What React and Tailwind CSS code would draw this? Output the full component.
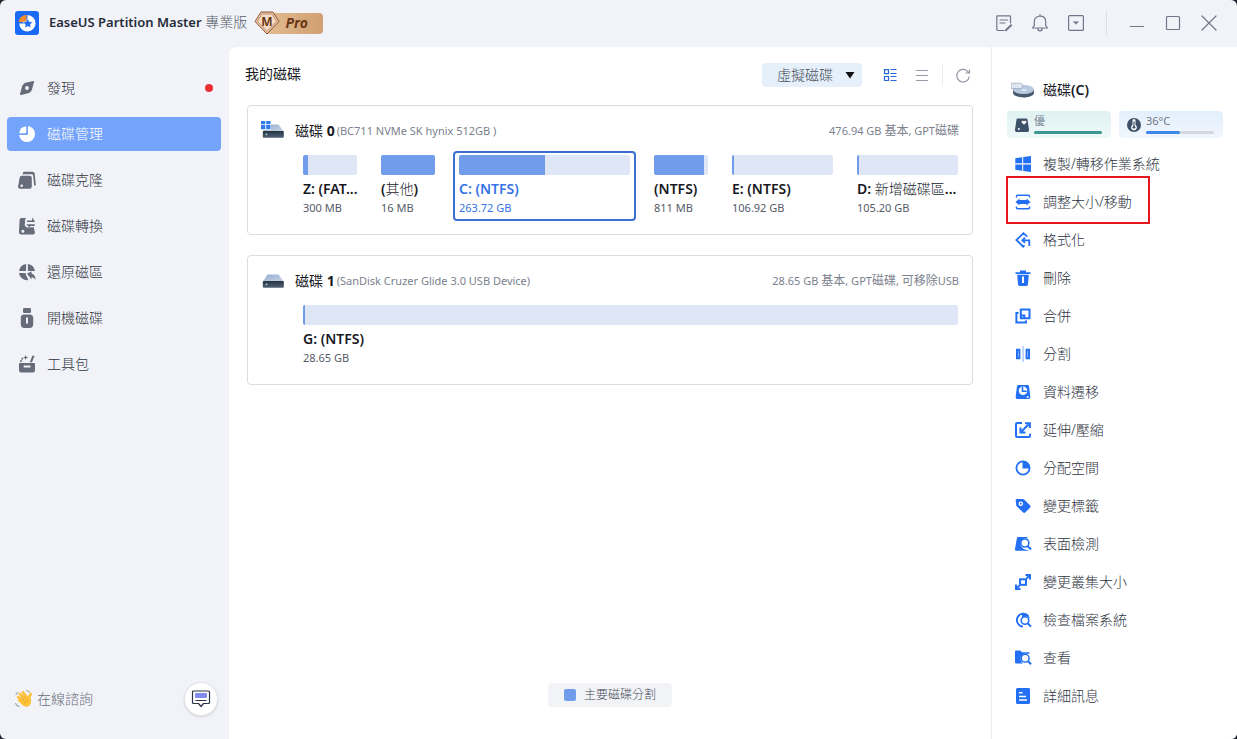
import React from "react";
import clsx from "clsx";

// ---------------- SIDEBAR ICONS (18x18) ----------------
const NAV_ICONS = {
  discover: (
    <>
      <path
        d="M7 4.900 15.300 2.800 12.900 11.200 10.900 13.300 2.800 15.300 5 7z"
        stroke="currentColor"
        strokeWidth="1.600"
        strokeLinejoin="round"
      />
      <circle cx="9" cy="9" r="1.900" fill="#f2f3f8" />
    </>
  ),
  manage: (
    <>
      <path d="M10 1.100A8 8 0 1 1 1.100 10H9a1 1 0 0 0 1-1z" />
      <path d="M8.200 1.200V7.200a1 1 0 0 1-1 1H1.200a8 8 0 0 1 7-7z" />
    </>
  ),
  clone: (
    <>
      <path
        fillRule="evenodd"
        d="M3.800 4.800H11.700c1.200 0 2 .8 2.100 2V15.500a2.200 2.200 0 0 1-2.200 2.200H2.200A2.200 2.200 0 0 1 .1 15.200L1.700 6.600C1.900 5.500 2.700 4.800 3.800 4.800zM3.700 13.500a1.300 1.300 0 1 0 0 2.600 1.300 1.300 0 0 0 0-2.600z"
      />
      <path
        d="M5.500.8H14.500a2.200 2.200 0 0 1 2.200 2L17.800 13.500c.1.600-.3 1.100-.9 1.100l-.8-.1L15.200 4.800c-.1-.9-.7-1.500-1.600-1.500H4.300z"
      />
    </>
  ),
  convert: (
    <>
      <path
        fillRule="evenodd"
        d="M3.500 1H8.200C7 2.300 6.600 3.900 7.200 5.600 5.900 7.500 6.800 9.600 9 10.400l6.700-.1 1.200 4.800A2.200 2.200 0 0 1 14.700 17.500H3.100A2.200 2.200 0 0 1 1 15.200L1.600 2.800A1.900 1.900 0 0 1 3.500 1zM4.900 12.800a1.500 1.500 0 1 0 0 3 1.500 1.500 0 0 0 0-3z"
      />
      <path d="M9 3.400h5V.4l3.200 4.500H9zM16.700 8.900h-4.600v2.200L8.200 7.300h8.500z" />
    </>
  ),
  restore: (
    <>
      <path d="M8.100 1v6.200a.9.900 0 0 1-.9.900H1A7.900 7.900 0 0 1 8.100 1zM9.900 1A7.900 7.900 0 0 1 17 8.100h-6.200a.9.900 0 0 1-.9-.9zM1 9.900h6.300L10.300 17A8 8 0 0 1 1 9.900z" />
      <path d="M8.900 10.400 13.500 8.500v2.100c2.500.6 4 2.700 4 6.400-1.100-2-2.200-2.700-4-2.800v2.300z" />
    </>
  ),
  boot: (
    <>
      <rect x="5" y="-1" width="8" height="5" rx="1.300" />
      <path
        fillRule="evenodd"
        d="M6 5.500h6c2 0 3.200 1.300 3.200 3.200v6.500c0 2.200-1.300 3.800-3.500 3.800H6.300c-2.200 0-3.500-1.600-3.500-3.800V8.700C2.800 6.800 4 5.500 6 5.500zM8 8.500v6h2v-6z"
      />
    </>
  ),
  toolkit: (
    <>
      <path
        fillRule="evenodd"
        d="M2 8H16c.7 0 1 .4 1 1v6.300A2.200 2.200 0 0 1 14.800 17.500H3.200A2.200 2.200 0 0 1 1 15.300V9c0-.6.3-1 1-1zM5.700 10.600v1.800h6.700v-1.800z"
      />
      <path d="M14.300.8h2.300L14 7.300h-2.200zM7.600 0l.7 1.800 1.900.7-1.900.7-.7 1.900-.7-1.900L5 2.500l1.900-.7z" />
      <circle cx="4.200" cy="3.800" r="1" />
      <path d="M2 5.200h2v1.500H2z" />
    </>
  ),
};

// ---------------- ACTION ICONS (18x18) ----------------
const ACTION_ICONS = {
  windows: (
    <path d="M1.300 3.200 8.200 2.200V8.300H1.300zM9.200 2 17 1V8.300H9.200zM1.300 9.500H8.200V15.800L1.300 14.800zM9.200 9.500H17V17L9.200 15.900z" />
  ),
  resize: (
    <>
      <path
        d="M2.500 4.500V3.200a1 1 0 0 1 1-1H14.500a1 1 0 0 1 1 1V4.500M2.500 13.500v1.300a1 1 0 0 0 1 1H14.500a1 1 0 0 0 1-1V13.500"
        fill="none"
        stroke="currentColor"
        strokeWidth="1.500"
      />
      <path d="M1.500 9 5.500 5.500V7H12.500V5.500L16.500 9l-4 3.500V11H5.500V12.500z" />
    </>
  ),
  format: (
    <path
      d="M13.200 5.700 9.400 2.200 2.400 9l6.700 6.700L10.500 14.400M7.500 9.300H15.300V15M11 6.700 8.400 9.300 11 12"
      fill="none"
      stroke="currentColor"
      strokeWidth="1.800"
    />
  ),
  remove: (
    <>
      <path d="M1.500 3.200H6V1.600h6v1.600h4.500V5h-15z" />
      <path fillRule="evenodd" d="M3.200 5.800H14.800L14 15.600a1.500 1.500 0 0 1-1.500 1.300h-7A1.500 1.500 0 0 1 4 15.600zM8 7.500V14h2V7.500z" />
    </>
  ),
  merge: (
    <>
      <path
        fillRule="evenodd"
        d="M6.800 1.500h8.700c.6 0 1 .4 1 1v8.700c0 .6-.4 1-1 1H6.800c-.6 0-1-.4-1-1V2.500c0-.6.4-1 1-1zM7.800 3.500v6.700h6.700V3.500z"
      />
      <path d="M4.500 6H2.400v9.400H12V13.500M7 8.500h3.300V11" fill="none" stroke="currentColor" strokeWidth="2" />
    </>
  ),
  split: (
    <>
      <path d="M3 4.800H5.400V13.200H3zM12.600 4.800H15V13.200H12.600z" fill="none" stroke="currentColor" strokeWidth="2" />
      <path d="M8.500 1h1.200V17H8.500z" opacity=".45" />
    </>
  ),
  migrate: (
    <>
      <path d="M4.500 2h9c.8 0 1.300.4 1.500 1.100L16.300 13.500c.2 1.500-.6 2.500-1.800 2.500H3.500C2.300 16 1.500 15 1.700 13.500L3 3.100C3.200 2.400 3.700 2 4.500 2z" />
      <circle cx="9" cy="7.800" r="4.300" fill="#fff" />
      <path d="M8.500 3.800V8.200H12.800" fill="none" stroke="currentColor" strokeWidth="1.600" />
      <circle cx="13.700" cy="14" r="1" fill="#fff" />
    </>
  ),
  extend: (
    <path
      d="M8 2H3a1 1 0 0 0-1 1V15a1 1 0 0 0 1 1H15a1 1 0 0 0 1-1V12.800M6.500 6.500V11.500H11.500M7 11 14.500 3.500M11 2.200h4.900V7"
      fill="none"
      stroke="currentColor"
      strokeWidth="2"
    />
  ),
  allocate: (
    <>
      <circle cx="9" cy="9" r="6.600" fill="none" stroke="currentColor" strokeWidth="1.800" />
      <path d="M8.500 2.500A6.500 6.500 0 0 1 15.500 9.500H8.500z" />
    </>
  ),
  label: (
    <path
      fillRule="evenodd"
      d="M2.800 2 8.800 1.900c.5 0 .9.200 1.300.5l6.100 6.200c.6.600.6 1.400 0 2l-5 5c-.6.6-1.400.6-2 0L2.700 9.300C2.400 9 2.200 8.600 2.200 8.100L1.700 3.200C1.600 2.500 2 2 2.800 2zM6.800 4.500a2.200 2.200 0 1 0 0 4.400 2.200 2.200 0 0 0 0-4.400zm0 1.300a.9.900 0 1 1 0 1.800.9.900 0 0 1 0-1.800z"
    />
  ),
  surface: (
    <>
      <path d="M4.700 2H13l1 1.200H10L6.300 7l.5 4.200 2.800 2.800L15.500 15.800H2.600C1.300 15.800.8 15 1 14L2.900 3.300C3.100 2.500 3.700 2 4.700 2z" />
      <circle cx="10.800" cy="8" r="4" fill="none" stroke="currentColor" strokeWidth="1.600" />
      <path d="M13.600 11 17 14.500" stroke="currentColor" strokeWidth="2" />
    </>
  ),
  cluster: (
    <>
      <rect x="6" y="6.300" width="6" height="5.500" fill="none" stroke="currentColor" strokeWidth="2" />
      <path d="M11.500 2H16V6.500M16 2 12.500 5.500M2 11.500V16H6.500M2 16 5.500 12.500" fill="none" stroke="currentColor" strokeWidth="2" />
    </>
  ),
  check: (
    <>
      <path d="M14.300 4.800A6.500 6.500 0 1 0 9 15.600" fill="none" stroke="currentColor" strokeWidth="1.900" />
      <path d="M8 2A7 7 0 0 1 16 7.500L12.500 5 8 6z" />
      <circle cx="11" cy="9.500" r="3.800" fill="none" stroke="currentColor" strokeWidth="1.600" />
      <path d="M13.700 12.200 17 15.600" stroke="currentColor" strokeWidth="2" />
    </>
  ),
  view: (
    <>
      <path d="M2.200 1.500H6.300L8 3.200h7.500V4.700H10L6.600 7.800l.3 4 2 2.700H2.200C1.500 14.500 1 14 1 13.300V2.700C1 2 1.500 1.500 2.200 1.500z" />
      <circle cx="11.200" cy="9.200" r="3.900" fill="none" stroke="currentColor" strokeWidth="1.500" />
      <path d="M13.900 12 17 15.300" stroke="currentColor" strokeWidth="2" />
    </>
  ),
  details: (
    <path
      fillRule="evenodd"
      d="M3.500 1h11C15.300 1 16 1.700 16 2.500v13c0 .8-.7 1.500-1.500 1.500h-11C2.700 17 2 16.300 2 15.500v-13C2 1.700 2.700 1 3.500 1zM5 5v1.500h3.500V5zM5 8.700v1.500h7V8.700zM5 12.200v1.500h8v-1.500z"
    />
  ),
};

// ---------------- DATA ----------------
const NAV_ITEMS = [
  { icon: "discover", name: "發現", dot: true },
  { icon: "manage", name: "磁碟管理", active: true },
  { icon: "clone", name: "磁碟克隆" },
  { icon: "convert", name: "磁碟轉換" },
  { icon: "restore", name: "還原磁區" },
  { icon: "boot", name: "開機磁碟" },
  { icon: "toolkit", name: "工具包" },
];

const ACTIONS = [
  { icon: "windows", name: "複製/轉移作業系統" },
  { icon: "resize", name: "調整大小/移動", highlighted: true },
  { icon: "format", name: "格式化" },
  { icon: "remove", name: "刪除" },
  { icon: "merge", name: "合併" },
  { icon: "split", name: "分割" },
  { icon: "migrate", name: "資料遷移" },
  { icon: "extend", name: "延伸/壓縮" },
  { icon: "allocate", name: "分配空間" },
  { icon: "label", name: "變更標籤" },
  { icon: "surface", name: "表面檢測" },
  { icon: "cluster", name: "變更叢集大小" },
  { icon: "check", name: "檢查檔案系統" },
  { icon: "view", name: "查看" },
  { icon: "details", name: "詳細訊息" },
];

const DISKS = [
  {
    id: "0",
    system: true,
    model: "(BC711 NVMe SK hynix 512GB )",
    summary: (
      <>
        476.94 GB <span className="text-xs">基本</span>, GPT<span className="text-xs">磁碟</span>
      </>
    ),
    columns: "grid-cols-[66px_66px_183fr_66px_113fr_113fr]",
    partitions: [
      { id: "z", label: "Z: (FAT...", size: "300 MB", used: 9 },
      { id: "other", label: <>(<span className="font-light">其他</span>)</>, size: "16 MB", used: 100 },
      { id: "c", label: "C: (NTFS)", size: "263.72 GB", used: 50 },
      { id: "recovery", label: "(NTFS)", size: "811 MB", used: 92 },
      { id: "e", label: "E: (NTFS)", size: "106.92 GB", used: 2 },
      { id: "d", label: <>D: <span className="font-light">新增磁碟區</span>...</>, size: "105.20 GB", used: 2 },
    ],
  },
  {
    id: "1",
    model: "(SanDisk Cruzer Glide 3.0 USB Device)",
    summary: (
      <>
        28.65 GB <span className="text-xs">基本</span>, GPT<span className="text-xs">磁碟</span>,{" "}
        <span className="text-xs">可移除</span>USB
      </>
    ),
    columns: "grid-cols-1",
    partitions: [{ id: "g", label: "G: (NTFS)", size: "28.65 GB", used: 0.3 }],
  },
];

// ---------------- DRAWINGS ----------------
function Logo() {
  return (
    <svg viewBox="0 0 24 24" className="size-6 shrink-0" aria-hidden="true">
      <rect width="24" height="24" rx="3" fill="#1a6af5" />
      <path d="M12.500 4A8.200 8.200 0 1 1 4.200 12.500H12.500z" fill="#fff" />
      <path d="M11.500 3.800V11H3.800C4 7.300 7 4 11.500 3.800z" fill="#f08a2c" />
      <path
        d="m12.800 7.500 1.500 3.200 3.500.4-2.600 2.400.7 3.500-3.100-1.700-3.100 1.700.7-3.500-2.600-2.400 3.500-.4z"
        fill="#1a6af5"
        stroke="#fff"
        strokeWidth=".5"
      />
    </svg>
  );
}

function ProBadge() {
  return (
    <div className="relative ml-[7px] flex h-6 w-[69px] shrink-0 items-center">
      <div className="ml-3 flex h-[21px] flex-1 items-center justify-center rounded bg-linear-to-r from-[#e3bb92] to-[#cfa072] pl-1">
        <span className="text-sm leading-5 font-bold text-[#693817] italic">Pro</span>
      </div>
      <svg viewBox="0 0 26 24" className="absolute top-0 left-0 h-6 w-[26px]" aria-hidden="true">
        <path d="M7 1H19L25 10.500 13 23 1 10.500z" fill="#e9c4a4" stroke="#8c5a3a" strokeLinejoin="round" />
        <path d="M8 3H18L22.500 10.300 13 20.500 3.500 10.300z" fill="#f6dcc6" stroke="#b98560" strokeWidth=".8" />
        <text x="13" y="14.500" textAnchor="middle" fontSize="12" fontWeight="700" fill="#693817">
          M
        </text>
      </svg>
    </div>
  );
}

function DriveIcon({ system }) {
  return (
    <svg viewBox="0 0 24 20" className="h-5 w-6 shrink-0" aria-hidden="true">
      <defs>
        <linearGradient id="driveTop" x1="0" y1="0" x2="1" y2="1">
          <stop offset="0" stopColor="#94aed3" />
          <stop offset="1" stopColor="#c9d3e3" />
        </linearGradient>
        <linearGradient id="driveFront" x1="0" y1="0" x2="0" y2="1">
          <stop offset="0" stopColor="#263440" />
          <stop offset="1" stopColor="#52617a" />
        </linearGradient>
      </defs>
      <path d="M6.500 3.500H17.500L22.700 10.500H2z" fill="url(#driveTop)" />
      <rect x="1.800" y="10" width="21" height="6.800" rx=".8" fill="url(#driveFront)" />
      <circle cx="5.500" cy="13.300" r=".9" fill="#9fe0d0" />
      {system && (
        <>
          <path d="M0-1H10V9H0z" fill="#fff" />
          <path d="M0-1H4.300V3.200H0zM5.200-1H9.500V3.200H5.200zM0 4.100H4.300V8.300H0zM5.200 4.100H9.500V8.300H5.200z" fill="#2f7bea" />
        </>
      )}
    </svg>
  );
}

function VolumeIcon() {
  return (
    <svg viewBox="0 0 24 18" className="h-[18px] w-6 shrink-0" aria-hidden="true">
      <path d="M2 8.500V12c0 2.300 4.700 4.500 10.500 4.500S23 14.300 23 12V8.500z" fill="#4a5b70" />
      <ellipse cx="12.500" cy="8.500" rx="10.500" ry="4.600" fill="#b9c8df" />
      <ellipse cx="13" cy="9" rx="3" ry="1.200" fill="#d8e1ef" />
      <path d="M1.500 2.200H9.500c1.500.2 2.200 1.200 2.500 2.300L10.500 7.500H0V3.700c0-1 .6-1.500 1.500-1.500z" fill="#dfe6f2" stroke="#94a4bc" strokeWidth=".7" />
    </svg>
  );
}

function WavingHand() {
  return (
    <svg viewBox="0 0 18 18" className="size-[18px]" aria-hidden="true">
      <g stroke="#fdc33c" strokeLinecap="round" strokeWidth="2.600">
        <path d="M3 7 8.500 12M4.700 3.700 10 9.500M8 2.200 12.500 8M12 11.500 15.800 3.800" />
      </g>
      <path d="M4.500 8.500 11.500 5.500 14.800 6.500C17 10 16.800 14 13.800 16 11.500 17.500 9 16.800 7.200 14.800L2.500 10.600z" fill="#fdc33c" />
      <path d="M5.200 6.800 9 10.500M7.300 4.500 11 8.600M10.200 13.500C10.400 11.300 11.500 10 13.500 9.500" fill="none" stroke="#e69322" strokeWidth=".7" />
      <path d="M.6 13.500Q1.500 15.800 4 16.500M11.500.8Q14 .8 14.500 2M1 4.500 2.500 2.500" fill="none" stroke="#97a1ad" strokeWidth="1.100" strokeLinecap="round" />
    </svg>
  );
}

// ---------------- TITLE BAR ----------------
function WindowButton({ label, children }) {
  return (
    <button type="button" aria-label={label} className="flex size-9 cursor-pointer items-center justify-center text-[#71778a]">
      <svg viewBox="0 0 18 18" className="size-[18px]" fill="none" stroke="currentColor" strokeWidth="1.200" strokeLinejoin="round" strokeLinecap="round">
        {children}
      </svg>
    </button>
  );
}

function TitleBar() {
  return (
    <header className="flex h-[47px] items-center justify-between pr-[10px] pb-px pl-[15px]">
      <div className="flex items-center">
        <Logo />
        <h1 className="ml-[10px] pb-[2px] text-sm leading-5 font-light whitespace-nowrap text-[#555b67]">
          <span className="text-[13px] font-semibold text-[#252c3c]">EaseUS Partition Master</span> 專業版
        </h1>
        <ProBadge />
      </div>

      <div className="flex items-center">
        <WindowButton label="記錄">
          <path d="M15.500 9V2.800c0-.7-.3-1-1-1H2.800c-.7 0-1 .3-1 1V15.500c0 .7.3 1 1 1H9M5 6h7.500M5 9h5" />
          <path d="m10.800 16.300 5.300-5" strokeWidth="2" />
        </WindowButton>
        <WindowButton label="通知">
          <path d="M1.500 14H16.500L14.700 11.500V7.300C14.700 4.200 12.300 2.200 9 2.200S3.300 4.200 3.300 7.300v4.200zM9 2.200V.7M6.800 14.300C6.800 17.800 11.200 17.800 11.200 14.300" />
        </WindowButton>
        <WindowButton label="選單">
          <rect x="1.600" y="1.600" width="14.800" height="14.800" rx="1" />
          <path d="M6.500 7.700h5L9 10.200z" fill="currentColor" strokeWidth=".5" />
        </WindowButton>
        <span className="mx-3 h-6 w-px bg-[#dcdee5]" />
        <WindowButton label="最小化">
          <path d="M2.500 12.500h13" />
        </WindowButton>
        <WindowButton label="最大化">
          <rect x="2.500" y="2.500" width="13" height="13" rx="1" />
        </WindowButton>
        <WindowButton label="關閉">
          <path d="m2 2 14 14M16 2 2 16" />
        </WindowButton>
      </div>
    </header>
  );
}

// ---------------- SIDEBAR ----------------
function Sidebar() {
  return (
    <aside className="flex w-[229px] shrink-0 flex-col justify-between pt-6 pr-2 pb-[23px] pl-[7px]">
      <nav className="flex flex-col gap-3">
        {NAV_ITEMS.map((item) => (
          <a
            key={item.icon}
            href={`#${item.icon}`}
            className={clsx(
              "flex h-[34px] items-center gap-[11px] rounded pr-2 pl-[11px] text-sm font-light",
              item.active ? "bg-[#74a3fb] text-white" : "text-[#30353f]"
            )}
          >
            <svg
              viewBox="0 0 18 18"
              fill="currentColor"
              className={clsx("size-[18px] overflow-visible", item.active ? "text-white" : "text-[#666c7a]")}
              aria-hidden="true"
            >
              {NAV_ICONS[item.icon]}
            </svg>
            {item.name}
            {item.dot && <span className="ml-auto size-2 rounded-full bg-[#ee2f35]" />}
          </a>
        ))}
      </nav>

      <div className="flex items-center pr-[3px] pl-2">
        <WavingHand />
        <span className="ml-1 text-sm font-light text-[#666c7a]">在線諮詢</span>
        <button
          type="button"
          aria-label="在線諮詢"
          className="ml-auto flex size-[34px] cursor-pointer items-center justify-center rounded-full border border-[#e4e5ea] bg-white shadow-sm"
        >
          <svg viewBox="0 0 20 20" className="size-5" fill="none">
            <rect x="4" y="4" width="12" height="5" rx="1" fill="#818bf0" />
            <path d="M4.500 11.500h11" stroke="#2c3446" strokeWidth="1.200" />
            <path
              d="M2.500 2h15a1 1 0 0 1 1 1V13.500a1 1 0 0 1-1 1H12.500L10 17.500 7.500 14.500h-5a1 1 0 0 1-1-1V3a1 1 0 0 1 1-1z"
              stroke="#2c3446"
              strokeWidth="1.200"
              strokeLinejoin="round"
            />
          </svg>
        </button>
      </div>
    </aside>
  );
}

// ---------------- DISKS ----------------
function Partition({ partition, selected, onSelect }) {
  return (
    <button
      type="button"
      aria-pressed={selected}
      onClick={onSelect}
      className={clsx(
        "flex h-[70px] min-w-0 cursor-pointer flex-col rounded border-2 px-1 pt-[2px] text-left",
        selected ? "border-[#3a70d0] text-[#3573e8]" : "border-transparent text-[#17191f]"
      )}
    >
      <span className="block h-5 w-full overflow-hidden rounded-xs bg-[#dfe6f5]">
        <span className="block h-full min-w-[2px] bg-[#719ceb]" style={{ width: `${partition.used}%` }} />
      </span>
      <span className="mt-1 text-sm leading-5 font-semibold whitespace-nowrap">{partition.label}</span>
      <span className={clsx("text-[11px] leading-[18px]", !selected && "text-[#555b67]")}>{partition.size}</span>
    </button>
  );
}

function DiskCard({ disk, selected, onSelect }) {
  return (
    <section className="h-[130px] rounded border border-[#d9dce2] bg-white pt-[15px] pr-2 pl-[13px]">
      <div className="flex h-5 items-center pr-[5px]">
        <DriveIcon system={disk.system} />
        <h3 className="ml-[10px] text-sm text-[#17191f]">
          磁碟 <span className="font-bold">{disk.id}</span>
        </h3>
        <span className="ml-[2px] text-[11px] text-[#7b818d]">{disk.model}</span>
        <span className="ml-auto text-[11px] leading-4 text-[#7b818d]">{disk.summary}</span>
      </div>
      <div className={clsx("mt-[10px] ml-9 grid gap-3", disk.columns)}>
        {disk.partitions.map((p) => (
          <Partition key={p.id} partition={p} selected={selected === p.id} onSelect={() => onSelect(p.id)} />
        ))}
      </div>
    </section>
  );
}

function Workspace() {
  const [selected, setSelected] = React.useState("c");

  return (
    <main className="flex min-w-0 flex-1 flex-col rounded-tl-lg bg-white px-[18px] pt-4 pb-8">
      <div className="flex h-6 items-center pr-px">
        <h2 className="-ml-[2px] pb-[2px] text-sm text-[#17191f]">我的磁碟</h2>
        <div className="relative ml-auto">
          <select
            aria-label="虛擬磁碟"
            className="block h-6 w-[100px] cursor-pointer appearance-none rounded bg-[#e5f0fb] pl-[15px] text-sm font-light text-[#444a56]"
          >
            <option>虛擬磁碟</option>
          </select>
          <svg viewBox="0 0 10 8" className="pointer-events-none absolute top-2 right-[7px] h-2 w-[10px]" aria-hidden="true">
            <path d="M.5 1h9L5 7.500z" fill="#111" />
          </svg>
        </div>
        <button type="button" aria-label="圖形檢視" className="ml-[19px] cursor-pointer text-[#2768d8]">
          <svg viewBox="0 0 18 18" className="size-[18px]" fill="none" stroke="currentColor" strokeWidth="1.200">
            <path d="M3.500 3.600H7.500V7.600H3.500zM3.500 10.500H7.500V14.500H3.500zM9.500 3.500h6M9.500 7.500h6M9.500 10.500h6M9.500 14.500h6" />
          </svg>
        </button>
        <button type="button" aria-label="清單檢視" className="ml-[14px] cursor-pointer text-[#979ca8]">
          <svg viewBox="0 0 18 18" className="size-[18px]" fill="none" stroke="currentColor" strokeWidth="1.200">
            <path d="M3 4.500H15M3 9.500H15M3 14.500H15" />
          </svg>
        </button>
        <span className="mx-[11px] h-5 w-px bg-[#ebecf0]" />
        <button type="button" aria-label="重新整理" className="cursor-pointer text-[#9297a3]">
          <svg viewBox="0 0 18 18" className="size-[18px]" fill="none" stroke="currentColor" strokeWidth="1.200">
            <path d="M14.500 6.500A6.300 6.300 0 1 0 15.300 10.500M15.500 3.500V7H11.500" />
          </svg>
        </button>
      </div>

      <div className="mt-[18px] flex flex-col gap-5">
        {DISKS.map((disk) => (
          <DiskCard key={disk.id} disk={disk} selected={selected} onSelect={setSelected} />
        ))}
      </div>

      <div className="mx-auto mt-auto flex h-6 items-center gap-2 rounded bg-[#f2f3f7] px-4 text-xs font-light text-[#444a56]">
        <span className="size-3 rounded-xs bg-[#719ceb]" />
        主要磁碟分割
      </div>
    </main>
  );
}

// ---------------- ACTION PANEL ----------------
function ActionPanel() {
  return (
    <aside className="flex w-[246px] shrink-0 flex-col border-l border-[#ebecf0] bg-white pt-8 pr-[14px] pl-[15px]">
      <div className="flex h-[22px] items-center gap-2 pl-1">
        <VolumeIcon />
        <h2 className="text-sm text-[#17191f]">
          磁碟<span className="font-semibold">(C)</span>
        </h2>
      </div>

      <div className="mt-[10px] grid grid-cols-2 gap-2">
        <div className="flex h-[27px] items-center gap-1 rounded bg-linear-to-b from-[#dff1f1] to-[#eff9f9] pr-[9px] pl-[7px]">
          <svg viewBox="0 0 16 16" className="size-4 shrink-0" aria-hidden="true">
            <path d="M4 1.500h8c.9 0 1.400.4 1.500 1.200L15 12.500c.2 1.600-.6 2.500-2 2.500H3C1.600 15 .8 14.100 1 12.500L2.500 2.700C2.600 1.900 3.100 1.500 4 1.500z" fill="#3d5168" />
            <path d="M10 7.800 7.700 5.500C7 4.500 8.600 3 10 4.300c1.400-1.300 3 .2 2.300 1.200z" fill="#fff" />
            <circle cx="4.800" cy="12" r="1" fill="#fff" />
          </svg>
          <div className="flex-1 pb-[2px]">
            <p className="text-[11px] leading-4 text-[#7b8894]">優</p>
            <div className="mt-[2px] h-[3px] rounded-full bg-[#3c9793]" />
          </div>
        </div>
        <div className="flex h-[27px] items-center gap-1 rounded bg-linear-to-b from-[#e2effc] to-[#f1f7fe] pr-[9px] pl-[7px]">
          <svg viewBox="0 0 16 16" className="size-4 shrink-0" aria-hidden="true">
            <circle cx="8" cy="8" r="7" fill="#3d5168" />
            <path d="M6.500 3.500a1.500 1.500 0 0 1 3 0V8a2.900 2.900 0 1 1-3 0z" fill="#fff" />
            <path d="M8 4.500V10" stroke="#3d5168" strokeWidth="1.200" />
            <circle cx="8" cy="10.300" r="1.400" fill="#3d5168" />
          </svg>
          <div className="flex-1 pb-[2px]">
            <p className="text-[11px] leading-4 text-[#6d7785]">36°C</p>
            <div className="mt-[2px] h-[3px] rounded-full bg-[#d5d9df]">
              <div className="h-full w-1/2 rounded-full bg-[#3d87ea]" />
            </div>
          </div>
        </div>
      </div>

      <ul className="mt-[7px] pl-[7px]">
        {ACTIONS.map((action) => (
          <li key={action.icon} className="relative">
            <button type="button" className="flex h-[38px] w-full cursor-pointer items-center gap-[11px] text-sm font-light text-[#30353f]">
              <svg viewBox="0 0 18 18" fill="currentColor" className="size-[18px] text-[#2370f4]" aria-hidden="true">
                {ACTION_ICONS[action.icon]}
              </svg>
              <span>{action.name}</span>
            </button>
            {action.highlighted && (
              <span className="pointer-events-none absolute -top-[7px] -left-2 h-12 w-36 border-2 border-[#e4181c]" />
            )}
          </li>
        ))}
      </ul>
    </aside>
  );
}

export default function App() {
  return (
    <div className="min-h-screen bg-[#20242e] font-['Noto_Sans','Noto_Sans_CJK_TC',sans-serif]">
      <div className="flex min-h-screen flex-col overflow-hidden rounded-md bg-[#f2f3f8]">
        <TitleBar />
        <div className="flex flex-1">
          <Sidebar />
          <Workspace />
          <ActionPanel />
        </div>
      </div>
    </div>
  );
}
